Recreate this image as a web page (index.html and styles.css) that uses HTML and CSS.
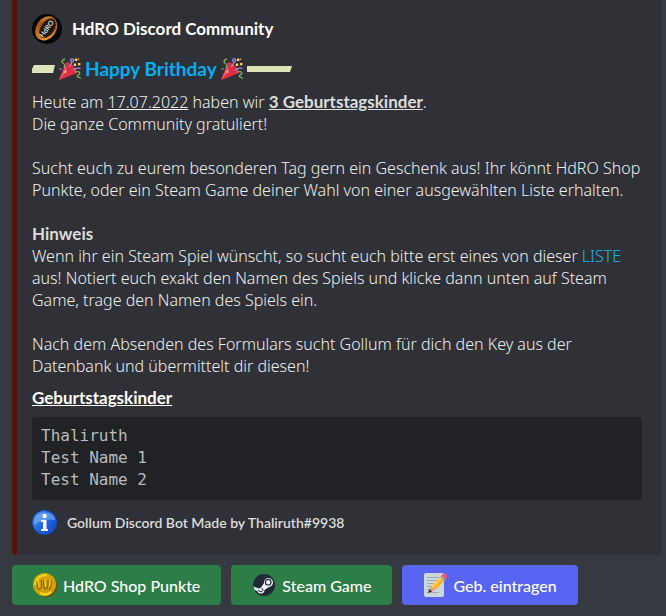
FILE: index.html
```
<!DOCTYPE html>
<html lang="de">

<head>
    <meta charset="UTF-8">
    <meta name="viewport" content="width=device-width, initial-scale=1.0">
    <title>HdRO Discord Community</title>
    <link rel="stylesheet" href="styles.css">
</head>

<body>
    <svg class="defs" width="0" height="0" aria-hidden="true">
        <symbol id="popper" viewBox="0 0 36 36">
            <path fill="#DD2E44" d="M11 8 0.700 33.900c-.4 1 .5 1.900 1.500 1.500L28 25C27 18 18 9 11 8z" />
            <path fill="#EA596E" d="M11 12 .7 33.900c-.2.8 0 1.100.4 1.400L13 22z" />
            <path fill="#DD2E44" d="M11.500 7.800c2-2 7 .8 11.500 5.200s7.400 9.500 5.500 11.500-7.500-.8-11.800-5.200-7.200-9.500-5.200-11.500z" />
            <path fill="none" stroke="#AA8DD8" stroke-width="2.200" d="M17 14c4-4 5-8 1-11M19 2c5-2 6 2 3 5M24 20c3-4 6-4 11-3M1 18h3" />
            <path fill="none" stroke="#77B255" stroke-width="2.200" d="M8 16c3-4 1-6-3-9 0-4 2-5 5-5M26 23c5-1 8-1 8 2s-5 2-4 5 5 0 5 4" />
            <path fill="#FFCC4D" d="M26 1h4v4h-4zM31 8h4v4h-4zM24 9h4v4h-4zM31 1h2v2h-2zM9 21h3v3H9z" />
        </symbol>
    </svg>

    <main class="message">
        <article class="embed">
            <header class="author">
                <svg class="author-icon" viewBox="0 0 30 30" aria-hidden="true">
                    <defs>
                        <linearGradient id="ring" x1="0" y1="0" x2="1" y2="1">
                            <stop offset="0" stop-color="#ffb65a" />
                            <stop offset=".3" stop-color="#a3560f" />
                            <stop offset=".7" stop-color="#d97a1c" />
                            <stop offset="1" stop-color="#ffb347" />
                        </linearGradient>
                    </defs>
                    <circle cx="15" cy="15" r="15" fill="#050303" />
                    <g transform="rotate(35 15 15)">
                        <ellipse cx="14" cy="15" rx="10" ry="13" fill="url(#ring)" />
                        <ellipse cx="15" cy="14" rx="7" ry="11" fill="#5d2c06" />
                        <ellipse cx="15" cy="14" rx="6" ry="10" fill="#171514" />
                    </g>
                    <text class="ring-text" x="15" y="17" text-anchor="middle" transform="rotate(-55 15 15)">HdRO</text>
                </svg>
                <span class="author-name">HdRO Discord Community</span>
            </header>

            <h1 class="title">
                <svg class="dash" width="23" height="8" viewBox="0 0 23 8" aria-hidden="true"><path fill="#dde5b6" d="M2 0h21l-2 8H0V4z" /></svg>
                <svg class="emoji" aria-hidden="true"><use href="#popper" /></svg>
                <a href="#">Happy Brithday</a>
                <svg class="emoji" aria-hidden="true"><use href="#popper" /></svg>
                <svg class="dash" width="45" height="6" viewBox="0 0 45 6" aria-hidden="true"><path fill="#dde5b6" d="M0 0h45l-2 6H0z" /></svg>
            </h1>

            <div class="description">
                <p>Heute am <u>17.07.2022</u> haben wir <strong><u>3 Geburtstagskinder</u></strong>.<br>
                    Die ganze Community gratuliert!</p>
                <p>Sucht euch zu eurem besonderen Tag gern ein Geschenk aus! Ihr könnt HdRO Shop Punkte, oder ein Steam Game deiner Wahl von einer ausgewählten Liste erhalten.</p>
                <p><strong>Hinweis</strong><br>
                    Wenn ihr ein Steam Spiel wünscht, so sucht euch bitte erst eines von dieser <a href="#">LISTE</a> aus! Notiert euch exakt den Namen des Spiels und klicke dann unten auf Steam Game, trage den Namen des Spiels ein.</p>
                <p>Nach dem Absenden des Formulars sucht Gollum für dich den Key aus der Datenbank und übermittelt dir diesen!</p>
            </div>

            <h2 class="field-name">Geburtstagskinder</h2>
            <pre class="names">Thaliruth
Test Name 1
Test Name 2</pre>

            <footer class="footer">
                <svg class="footer-icon" viewBox="0 0 25 25" aria-hidden="true">
                    <defs>
                        <linearGradient id="info" x1="0" y1="0" x2="1" y2="1">
                            <stop offset="0" stop-color="#5fa0f5" />
                            <stop offset=".5" stop-color="#2467dd" />
                            <stop offset="1" stop-color="#0b43c4" />
                        </linearGradient>
                    </defs>
                    <circle cx="12.500" cy="12.500" r="12" fill="url(#info)" stroke="#1450c4" />
                    <path fill="#8bbcfa" opacity=".5" d="M2 12C2 0 23 0 23 10 16 9 8 10 2 15z" />
                    <circle cx="12.500" cy="6" r="2.200" fill="#fff" />
                    <path fill="#fff" d="M9 10h5.500v9H16v2H9v-2h2v-7H9z" />
                </svg>
                <span>Gollum Discord Bot Made by Thaliruth#9938</span>
            </footer>
        </article>

        <div class="actions">
            <button type="button" class="button green">
                <svg class="button-icon" viewBox="0 0 24 24" aria-hidden="true">
                    <circle cx="13" cy="13" r="11" fill="#6d4a00" />
                    <circle cx="11.500" cy="11.500" r="11.500" fill="#d3a10b" />
                    <path fill="none" stroke="#f7d51f" stroke-width="2" d="M2 12C3 5 8 2 14 2M7 20c4 2 8 2 11-1" />
                    <path fill="none" stroke="#8c6500" stroke-width="1.200" d="M4 8c0 6 1 9 3 8s2-5 1-9M11 6c-1 6 0 10 2 10s2-4 2-9M18 7c1 4 0 7-2 10" />
                    <path fill="none" stroke="#ffdf2b" d="M5 7c0 4 1 7 2 7M12 6c0 5 0 8 1 8M17 7c0 4 0 6-1 7" />
                </svg>
                HdRO Shop Punkte
            </button>
            <button type="button" class="button green">
                <svg class="button-icon" viewBox="0 0 24 24" aria-hidden="true">
                    <circle cx="12" cy="12" r="11" fill="#202a38" />
                    <path fill="#f1f3f5" d="M1.500 13.500 7 15.500l2-1 3-4.500a4.500 4.500 0 1 1 5 4l-4.500 3a3.800 3.800 0 0 1-7.400 1L2.500 17z" />
                    <circle cx="16.200" cy="9.200" r="2.800" fill="#f1f3f5" stroke="#202a38" stroke-width="1.200" />
                    <path fill="none" stroke="#202a38" d="m6 17.500 2 1c3 1 4-2.500 1.500-3.500" />
                </svg>
                Steam Game
            </button>
            <button type="button" class="button blurple">
                <svg class="button-icon" viewBox="0 0 24 24" aria-hidden="true">
                    <rect x="1" y="0" width="20" height="24" rx="2" fill="#ccd6dd" />
                    <path stroke="#99aab5" d="M4 4.500h13M4 7.500h12M4 10.500h9M4 13.500h6M4 16.500h3M4 19.500h12" />
                    <path fill="#ffcc4d" d="m8 13 10-10 4 4-10 10z" />
                    <path fill="#ffac33" d="m20 5 2 2-10 10-2-2z" />
                    <path fill="#e1a679" d="m8 13 4 4-6 3z" />
                    <path fill="#292f33" d="m6.500 16-1.500 4 4-1.500z" />
                    <path fill="#99aab5" d="m17 4 1.500-1.500 4 4L21 8z" />
                    <path fill="#ea596e" d="M18.500 2.500 20 1c2-2 5 2 4 4l-1.500 1.500z" />
                </svg>
                Geb. eintragen
            </button>
        </div>
    </main>
</body>

</html>
```
FILE: styles.css
```
* {
    box-sizing: border-box;
    margin: 0;
    padding: 0;
}

body {
    background-color: #36393f;
    color: #dcddde;
    font-family: Lato, "Noto Sans", sans-serif;
    font-size: 17px;
    line-height: 22px;
}

a {
    color: #00aff4;
    text-decoration: none;
}

.defs {
    position: absolute;
}

.message {
    padding: 0 4px 10px 12px;
}

.embed {
    padding: 14px 20px 20px 15px;
    background-color: #2f3136;
    border-left: 5px solid #541507;
    border-radius: 0 0 4px 4px;
}

/* Author */
.author {
    display: flex;
    align-items: center;
    gap: 10px;
    color: #fff;
    font-weight: 700;
}

.author-icon {
    width: 30px;
    height: 30px;
}

.ring-text {
    fill: #ddd;
    font-size: 7px;
}

/* Title */
.title {
    display: flex;
    align-items: center;
    gap: 4px;
    margin-top: 13px;
    font-size: 19px;
    line-height: 24px;
}

.emoji {
    width: 22px;
    height: 22px;
}

.description {
    display: grid;
    gap: 22px;
    margin-top: 10px;
    color: #eeeff0;
    font-family: "Noto Sans", sans-serif;
    font-size: 16px;
    font-weight: 300;
}

.description a {
    color: #18b4f8;
}

.description strong {
    color: #dcddde;
    font-family: Lato, sans-serif;
    font-size: 17px;
    font-weight: 700;
    line-height: 20px;
}

.field-name {
    margin-top: 10px;
    color: #fff;
    font-size: 17px;
    line-height: 22px;
    text-decoration: underline;
}

.names {
    margin-top: 8px;
    padding: 8px 9px 9px;
    background-color: #202225;
    border-radius: 4px;
    color: #b9bbbe;
    font-family: "DejaVu Sans Mono", monospace;
    font-size: 16px;
}

.footer {
    display: flex;
    align-items: center;
    gap: 10px;
    margin-top: 10px;
    font-size: 14px;
    font-weight: 600;
}

.footer-icon {
    width: 25px;
    height: 25px;
}

/* Buttons */
.actions {
    display: flex;
    flex-wrap: wrap;
    gap: 10px;
    margin-top: 10px;
}

.button {
    display: flex;
    align-items: center;
    gap: 6px;
    height: 40px;
    padding: 0 21px;
    border: none;
    border-radius: 4px;
    color: #fff;
    font-family: inherit;
    font-size: 16px;
    font-weight: 500;
    cursor: pointer;
}

.button-icon {
    width: 24px;
    height: 24px;
}

.green {
    background-color: #2d7d46;
}

.blurple {
    background-color: #5865f2;
}
```
